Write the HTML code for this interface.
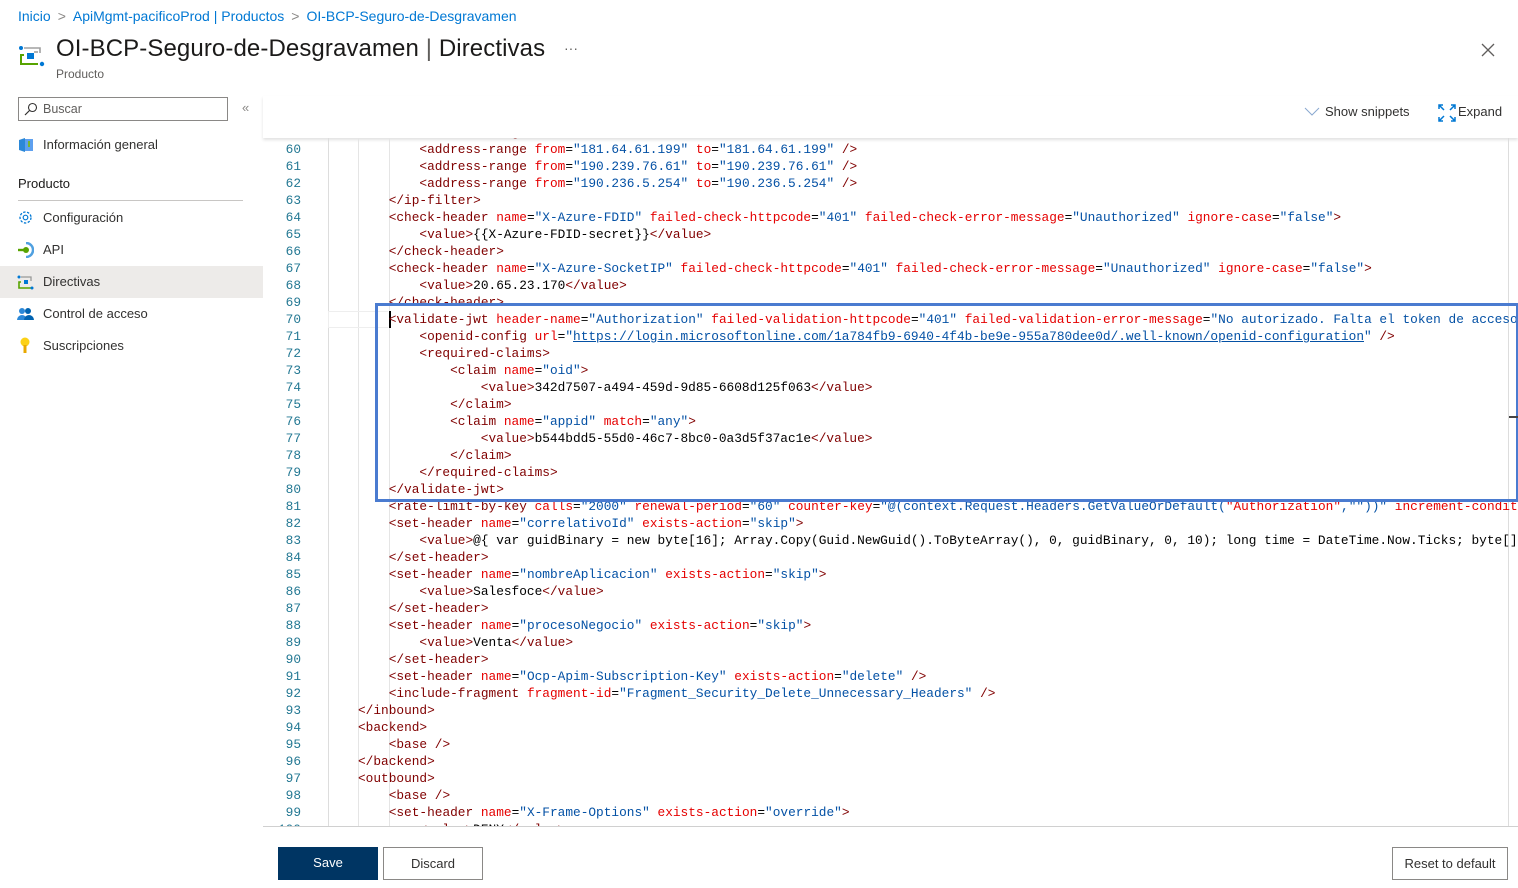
<!DOCTYPE html>
<html><head><meta charset="utf-8"><style>
*{box-sizing:border-box;margin:0;padding:0}
body{width:1518px;height:888px;overflow:hidden;background:#fff;font-family:"Liberation Sans",sans-serif;color:#323130;position:relative}
.abs{position:absolute}
.bc{top:8px;left:18px;font-size:14px;color:#0078d4}
.bc span{color:#8a8886;margin:0 7px}
h1{position:absolute;left:56px;top:35px;font-size:24px;font-weight:normal;color:#1b1a19;letter-spacing:0.1px}
.nav{font-size:13px;color:#323130}
.nav div{position:absolute;left:0;width:263px;height:32px;line-height:32px;padding-left:43px}
.code{position:absolute;left:263px;top:138px;width:1255px;height:688px;overflow:hidden;font-family:"Liberation Mono",monospace;font-size:12.8px}
.ln{position:absolute;left:0;width:38px;text-align:right;color:#237893;height:17px;line-height:17px}
.cl{position:absolute;white-space:pre;height:17px;line-height:17px;color:#000}
.t{color:#800000}.a{color:#e50000}.v{color:#0451a5}
.btn{position:absolute;top:847px;height:33px;font-size:13px;text-align:center;line-height:31px}
</style></head><body>
<div class="abs bc">Inicio<span>&gt;</span>ApiMgmt-pacificoProd | Productos<span>&gt;</span>OI-BCP-Seguro-de-Desgravamen</div>
<svg class="abs" style="left:18px;top:44px" width="28" height="28" viewBox="0 0 28 28">
<circle cx="3" cy="4" r="2" fill="#0078d4"/><path d="M6 4h16v5" stroke="#a0a0a0" stroke-width="1.6" fill="none"/><path d="M20 8h-4" stroke="#a0a0a0" stroke-width="1.6"/>
<rect x="9" y="9" width="7" height="6" fill="#0078d4"/><path d="M6 11H3v9h17" stroke="#57a300" stroke-width="2" fill="none"/><circle cx="24" cy="20" r="2.2" fill="#0078d4"/></svg>
<h1>OI-BCP-Seguro-de-Desgravamen <span style="color:#605e5c">|</span> Directivas</h1>
<div class="abs" style="left:564px;top:40px;font-size:14px;color:#605e5c">···</div>
<div class="abs" style="left:56px;top:67px;font-size:12px;color:#605e5c">Producto</div>
<svg class="abs" style="left:1481px;top:43px" width="14" height="14"><path d="M1 1L13 13M13 1L1 13" stroke="#605e5c" stroke-width="1.3"/></svg>
<div class="abs" style="left:18px;top:97px;width:210px;height:24px;border:1px solid #8a8886;font-size:12.5px;line-height:22px;padding-left:24px;color:#605e5c">Buscar</div>
<svg class="abs" style="left:24px;top:102px" width="14" height="14"><circle cx="8.5" cy="5.5" r="4" stroke="#323130" fill="none" stroke-width="1.1"/><path d="M5.5 8.5L1 13" stroke="#323130" stroke-width="1.2"/></svg>
<div class="abs" style="left:242px;top:100px;font-size:13px;color:#8a8886">«</div>
<div class="nav">
<div style="top:129px">Información general</div>
<div style="top:168px;padding-left:18px;color:#1b1a19">Producto</div>
<div style="top:202px">Configuración</div>
<div style="top:234px">API</div>
<div style="top:266px;background:#edebe9">Directivas</div>
<div style="top:298px">Control de acceso</div>
<div style="top:330px">Suscripciones</div>
</div>
<div class="abs" style="left:18px;top:200px;width:225px;height:1px;background:#c8c6c4"></div>
<svg class="abs" style="left:18px;top:137px" width="16" height="16"><path d="M1 3l6-2v14l-6-2z" fill="#2b88d8"/><rect x="7" y="2" width="8" height="12" fill="#5ea0ef"/><path d="M11 4v6" stroke="#7fba00" stroke-width="1.6"/></svg>
<svg class="abs" style="left:17px;top:209px" width="17" height="17"><circle cx="8.5" cy="8.5" r="5.5" stroke="#0078d4" fill="none" stroke-width="1.3" stroke-dasharray="2.4 1.5"/><circle cx="8.5" cy="8.5" r="2.3" stroke="#0078d4" fill="none" stroke-width="1.2"/></svg>
<svg class="abs" style="left:17px;top:242px" width="17" height="16"><path d="M1 8h7" stroke="#57a300" stroke-width="2.4"/><circle cx="9" cy="8" r="3" fill="#57a300"/><path d="M9 1a7 7 0 0 1 0 14" stroke="#50a0e0" stroke-width="2.5" fill="none"/></svg>
<svg class="abs" style="left:17px;top:274px" width="17" height="16"><circle cx="2" cy="3" r="1.5" fill="#0078d4"/><path d="M4 3h10v4" stroke="#999" stroke-width="1.3" fill="none"/><rect x="7" y="6" width="4" height="4" fill="#0078d4"/><path d="M4 8H2v6h12" stroke="#57a300" stroke-width="1.6" fill="none"/><circle cx="15" cy="14" r="1.5" fill="#0078d4"/></svg>
<svg class="abs" style="left:17px;top:306px" width="17" height="16"><circle cx="5" cy="5" r="3" fill="#2b88d8"/><path d="M0 14a5 5 0 0 1 10 0z" fill="#2b88d8"/><circle cx="11" cy="5" r="3" fill="#0063b1"/><path d="M7 14a5 5 0 0 1 10 0z" fill="#0063b1"/></svg>
<svg class="abs" style="left:19px;top:337px" width="12" height="17"><circle cx="6" cy="5" r="4.5" fill="#fcd116"/><rect x="4.5" y="8" width="3" height="8" fill="#e8a800"/></svg>
<div class="abs" style="left:263px;top:96px;width:1255px;height:42px;box-shadow:0 2px 3px rgba(0,0,0,.12)"></div>
<svg class="abs" style="left:1304px;top:107px" width="16" height="10"><path d="M1 1l7 7 7-7" stroke="#8aa8d0" fill="none" stroke-width="1"/></svg>
<div class="abs" style="left:1325px;top:104px;font-size:13px;color:#323130">Show snippets</div>
<svg class="abs" style="left:1438px;top:104px" width="18" height="18"><g stroke="#0078d4" stroke-width="1.5" fill="none"><path d="M1 5V1h4M1 1l5 5M17 5V1h-4M17 1l-5 5M1 13v4h4M1 17l5-5M17 13v4h-4M17 17l-5-5"/></g></svg>
<div class="abs" style="left:1458px;top:104px;font-size:13px;color:#323130">Expand</div>
<div class="code">
<div class="abs" style="left:65px;top:0;width:1px;height:688px;background:#ddd"></div>
<div class="abs" style="left:95px;top:0;width:1px;height:688px;background:#e5e5e5"></div>
<div class="abs" style="left:126px;top:0;width:1px;height:688px;background:#e5e5e5"></div>
<div class="abs" style="left:65px;top:173px;width:60px;height:17px;border:1px solid #eee;border-right:none"></div>
<div class="abs" style="left:1245px;top:0;width:1px;height:688px;background:#ddd"></div>
<div class="abs" style="left:126px;top:173px;width:2px;height:17px;background:#000"></div>
<div id="c"></div>
</div>
<div class="abs" style="left:375px;top:303px;width:1143px;height:199px;border:3px solid #4a7bd0;border-right-width:2px"></div>
<div class="abs" style="left:1509px;top:416px;width:9px;height:2px;background:#444"></div>
<div class="abs" style="left:263px;top:826px;width:1255px;height:1px;background:#d0d0d0"></div>
<div class="btn" style="left:278px;width:100px;background:#003563;color:#fff">Save</div>
<div class="btn" style="left:383px;width:100px;border:1px solid #8a8886;color:#323130">Discard</div>
<div class="btn" style="left:1392px;width:116px;border:1px solid #8a8886;color:#323130">Reset to default</div>
<script>
function T(s){return '<span class="t">'+s+'</span>'}
function A(n,v){return ' <span class="a">'+n+'</span>=<span class="v">"'+v+'"</span>'}
var L={
59:[2,T('&lt;address-range')+A('from','181.64.61.198')+A('to','181.64.61.198')+' '+T('/&gt;')],
60:[2,T('&lt;address-range')+A('from','181.64.61.199')+A('to','181.64.61.199')+' '+T('/&gt;')],
61:[2,T('&lt;address-range')+A('from','190.239.76.61')+A('to','190.239.76.61')+' '+T('/&gt;')],
62:[2,T('&lt;address-range')+A('from','190.236.5.254')+A('to','190.236.5.254')+' '+T('/&gt;')],
63:[1,T('&lt;/ip-filter&gt;')],
64:[1,T('&lt;check-header')+A('name','X-Azure-FDID')+A('failed-check-httpcode','401')+A('failed-check-error-message','Unauthorized')+A('ignore-case','false')+T('&gt;')],
65:[2,T('&lt;value&gt;')+'{{X-Azure-FDID-secret}}'+T('&lt;/value&gt;')],
66:[1,T('&lt;/check-header&gt;')],
67:[1,T('&lt;check-header')+A('name','X-Azure-SocketIP')+A('failed-check-httpcode','401')+A('failed-check-error-message','Unauthorized')+A('ignore-case','false')+T('&gt;')],
68:[2,T('&lt;value&gt;')+'20.65.23.170'+T('&lt;/value&gt;')],
69:[1,T('&lt;/check-header&gt;')],
70:[1,T('&lt;validate-jwt')+A('header-name','Authorization')+A('failed-validation-httpcode','401')+A('failed-validation-error-message','No autorizado. Falta el token de acceso o no es válido.')+T('&gt;')],
71:[2,T('&lt;openid-config')+' <span class="a">url</span>=<span class="v">"<u>https://login.microsoftonline.com/1a784fb9-6940-4f4b-be9e-955a780dee0d/.well-known/openid-configuration</u>"</span> '+T('/&gt;')],
72:[2,T('&lt;required-claims&gt;')],
73:[3,T('&lt;claim')+A('name','oid')+T('&gt;')],
74:[4,T('&lt;value&gt;')+'342d7507-a494-459d-9d85-6608d125f063'+T('&lt;/value&gt;')],
75:[3,T('&lt;/claim&gt;')],
76:[3,T('&lt;claim')+A('name','appid')+A('match','any')+T('&gt;')],
77:[4,T('&lt;value&gt;')+'b544bdd5-55d0-46c7-8bc0-0a3d5f37ac1e'+T('&lt;/value&gt;')],
78:[3,T('&lt;/claim&gt;')],
79:[2,T('&lt;/required-claims&gt;')],
80:[1,T('&lt;/validate-jwt&gt;')],
81:[1,T('&lt;rate-limit-by-key')+A('calls','2000')+A('renewal-period','60')+' <span class="a">counter-key</span>=<span class="v">"@(context.Request.Headers.GetValueOrDefault(</span><span class="a">"Authorization"</span><span class="v">,""))"</span> <span class="a">increment-condition</span>'],
82:[1,T('&lt;set-header')+A('name','correlativoId')+A('exists-action','skip')+T('&gt;')],
83:[2,T('&lt;value&gt;')+'@{ var guidBinary = new byte[16]; Array.Copy(Guid.NewGuid().ToByteArray(), 0, guidBinary, 0, 10); long time = DateTime.Now.Ticks; byte[] bytes'],
84:[1,T('&lt;/set-header&gt;')],
85:[1,T('&lt;set-header')+A('name','nombreAplicacion')+A('exists-action','skip')+T('&gt;')],
86:[2,T('&lt;value&gt;')+'Salesfoce'+T('&lt;/value&gt;')],
87:[1,T('&lt;/set-header&gt;')],
88:[1,T('&lt;set-header')+A('name','procesoNegocio')+A('exists-action','skip')+T('&gt;')],
89:[2,T('&lt;value&gt;')+'Venta'+T('&lt;/value&gt;')],
90:[1,T('&lt;/set-header&gt;')],
91:[1,T('&lt;set-header')+A('name','Ocp-Apim-Subscription-Key')+A('exists-action','delete')+' '+T('/&gt;')],
92:[1,T('&lt;include-fragment')+A('fragment-id','Fragment_Security_Delete_Unnecessary_Headers')+' '+T('/&gt;')],
93:[0,T('&lt;/inbound&gt;')],
94:[0,T('&lt;backend&gt;')],
95:[1,T('&lt;base')+' '+T('/&gt;')],
96:[0,T('&lt;/backend&gt;')],
97:[0,T('&lt;outbound&gt;')],
98:[1,T('&lt;base')+' '+T('/&gt;')],
99:[1,T('&lt;set-header')+A('name','X-Frame-Options')+A('exists-action','override')+T('&gt;')],
100:[2,T('&lt;value&gt;')+'DENY'+T('&lt;/value&gt;')]
};
var h='';
for(var n=59;n<=100;n++){var y=3+(n-60)*17;
h+='<div class="ln" style="top:'+y+'px">'+n+'</div>';
h+='<div class="cl" style="top:'+y+'px;left:'+(95+L[n][0]*30.7)+'px">'+L[n][1]+'</div>';}
document.getElementById('c').innerHTML=h;
</script>
</body></html>
